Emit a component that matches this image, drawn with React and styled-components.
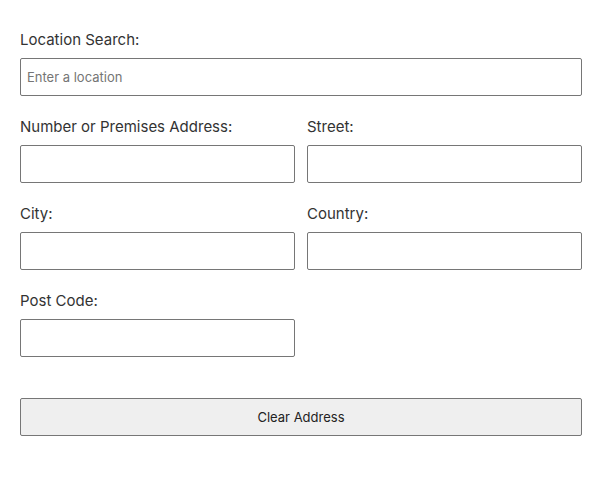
import styled, { createGlobalStyle } from "styled-components";

const GlobalStyle = createGlobalStyle`
  body {
    margin: 0;
    background: #fff;
    font-family: Inter, "Liberation Sans", Arial, sans-serif;
  }
`;

const Form = styled.form`
  padding: 31px 20px 0;
  display: flex;
  flex-direction: column;
`;

const Grid = styled.div`
  display: grid;
  grid-template-columns: 1fr 1fr;
  column-gap: 12px;
  row-gap: 22px;
`;

const Field = styled.div`
  display: flex;
  flex-direction: column;
  grid-column: ${(p) => (p.$full ? "1 / -1" : "auto")};
`;

const Label = styled.label`
  font-size: 15px;
  line-height: 18px;
  color: #333;
  margin-bottom: 9px;
`;

const Input = styled.input`
  box-sizing: border-box;
  height: 38px;
  width: 100%;
  border: 1px solid #767676;
  border-radius: 2px;
  padding: 0 6px;
  font-family: Inter, "Liberation Sans", Arial, sans-serif;
  font-size: 13px;
  color: #222;
  &::placeholder {
    color: #757575;
  }
`;

const ClearButton = styled.button`
  margin-top: 41px;
  height: 38px;
  width: 100%;
  background: #efefef;
  border: 1px solid #767676;
  border-radius: 2px;
  font-family: Inter, "Liberation Sans", Arial, sans-serif;
  font-size: 13px;
  color: #222;
`;

const fields = [
  { id: "search", label: "Location Search:", placeholder: "Enter a location", full: true },
  { id: "number", label: "Number or Premises Address:" },
  { id: "street", label: "Street:" },
  { id: "city", label: "City:" },
  { id: "country", label: "Country:" },
  { id: "postcode", label: "Post Code:" },
];

export default function App() {
  return (
    <>
      <GlobalStyle />
      <Form onSubmit={(e) => e.preventDefault()}>
        <Grid>
          {fields.map((f) => (
            <Field key={f.id} $full={f.full}>
              <Label htmlFor={f.id}>{f.label}</Label>
              <Input id={f.id} type="text" placeholder={f.placeholder} />
            </Field>
          ))}
        </Grid>
        <ClearButton type="button">Clear Address</ClearButton>
      </Form>
    </>
  );
}
